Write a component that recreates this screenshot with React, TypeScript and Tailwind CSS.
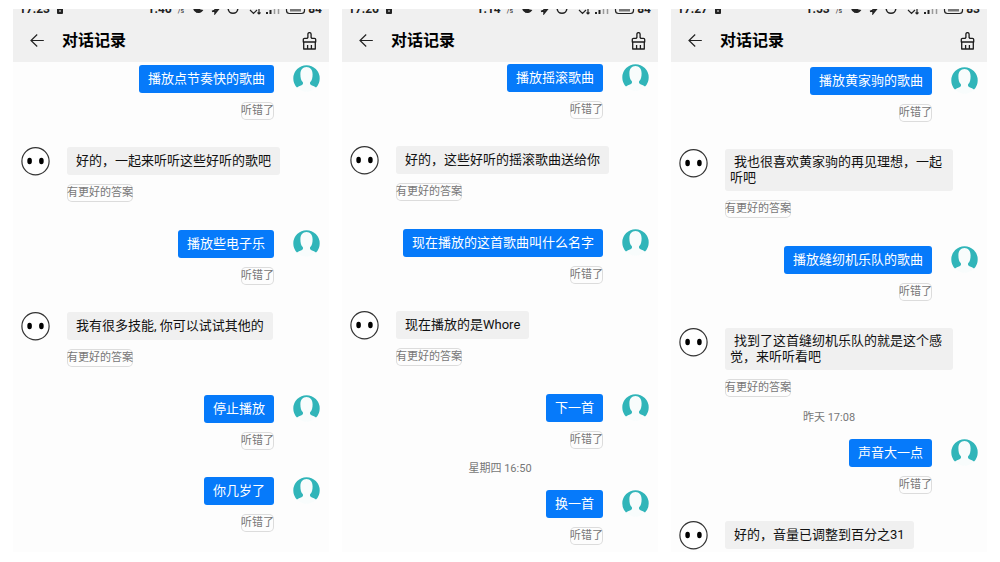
import clsx from "clsx";

type Message = {
  from: "user" | "bot";
  text: string;
  time?: string;
  noFeedback?: boolean;
};

type Screen = {
  clock: string;
  speed: string;
  battery: string;
  offset: string;
  messages: Message[];
};

const screens: Screen[] = [
  {
    clock: "17:23",
    speed: "1.46",
    battery: "84",
    offset: "pt-[3px]",
    messages: [
      { from: "user", text: "播放点节奏快的歌曲" },
      { from: "bot", text: "好的，一起来听听这些好听的歌吧" },
      { from: "user", text: "播放些电子乐" },
      { from: "bot", text: "我有很多技能, 你可以试试其他的" },
      { from: "user", text: "停止播放" },
      { from: "user", text: "你几岁了" },
    ],
  },
  {
    clock: "17:26",
    speed: "1.14",
    battery: "84",
    offset: "pt-0.5",
    messages: [
      { from: "user", text: "播放摇滚歌曲" },
      { from: "bot", text: "好的，这些好听的摇滚歌曲送给你" },
      { from: "user", text: "现在播放的这首歌曲叫什么名字" },
      { from: "bot", text: "现在播放的是Whore" },
      { from: "user", text: "下一首" },
      { from: "user", text: "换一首", time: "星期四 16:50" },
    ],
  },
  {
    clock: "17:27",
    speed: "1.53",
    battery: "83",
    offset: "pt-[5px]",
    messages: [
      { from: "user", text: "播放黄家驹的歌曲" },
      { from: "bot", text: "我也很喜欢黄家驹的再见理想，一起听吧" },
      { from: "user", text: "播放缝纫机乐队的歌曲" },
      { from: "bot", text: "找到了这首缝纫机乐队的就是这个感觉，来听听看吧" },
      { from: "user", text: "声音大一点", time: "昨天 17:08" },
      { from: "bot", text: "好的，音量已调整到百分之31", noFeedback: true },
    ],
  },
];

function UserAvatar() {
  return (
    <svg viewBox="0 0 27 27" className="size-[27px] shrink-0" aria-hidden="true">
      <circle cx="13.5" cy="13.5" r="13.2" fill="#f8fcfc" />
      <path
        d="M4 22.6A13.2 13.2 0 1 1 23 22.6C21.8 21.4 19.2 20.7 17.7 19.8C16.8 19.2 16.8 17.9 17.3 17C18.9 15.2 19.6 12.8 19.6 9.4C19.6 4.8 17.3 2 13.5 2C9.7 2 7.4 4.8 7.4 9.4C7.4 12.8 8.1 15.2 9.7 17C10.2 17.9 10.2 19.2 9.3 19.8C7.8 20.7 5.2 21.4 4 22.6Z"
        fill="#31b5b9"
      />
    </svg>
  );
}

function BotAvatar() {
  return (
    <svg viewBox="0 0 29 29" className="size-[29px] shrink-0" aria-hidden="true">
      <circle cx="14.5" cy="14.2" r="13.6" fill="#fff" stroke="#333" strokeWidth="1.2" />
      <ellipse cx="8.6" cy="14" rx="2.3" ry="3.2" fill="#000" />
      <ellipse cx="20.4" cy="14" rx="2.3" ry="3.2" fill="#000" />
    </svg>
  );
}

function StatusBar({ clock, speed, battery }: Omit<Screen, "offset" | "messages">) {
  return (
    <div className="h-[11px] overflow-hidden">
      <div className="-mt-2 flex h-4 items-center pr-[7px] pl-1.5 text-xs leading-4 font-bold text-[#222]">
        <span>{clock}</span>
        <svg viewBox="0 0 6 10" className="ml-[7px] h-2.5 w-1.5" aria-hidden="true">
          <rect width="6" height="10" rx="1" fill="#222" />
          <path d="M2 7h2" stroke="#f0f0f0" />
        </svg>
        <span className="ml-auto">{speed}</span>
        <span className="ml-1.5 self-end text-[7px] leading-3 font-normal">/s</span>
        <svg
          viewBox="0 0 128 12"
          className="ml-2 h-3 w-32"
          fill="none"
          stroke="#222"
          strokeWidth="1.5"
          aria-hidden="true"
        >
          <path d="M4 1a4.500 4.500 0 1 0 6 6.500A7 7 0 0 1 4 1Z" fill="#222" />
          <path d="M4 7.500h4" strokeWidth="4" />
          <path d="M20 8.500l7-3-4 5V1l4 4" />
          <circle cx="41" cy="5.500" r="4.800" />
          <path d="M58 7l3.500 3.500L65 7M67 5v6M65.500 9.500L67 11l1.500-1.500" strokeWidth="1.200" />
          <path d="M75 9v2M78.500 7v4" strokeWidth="2" />
          <path d="M82.500 5v6M86.500 3v8" stroke="#999" />
          <rect x="94.500" y="2" width="18" height="8.500" rx="3" strokeWidth="1.200" />
          <path d="M98 7h11" stroke="#777" strokeWidth="3" />
        </svg>
        <span className="-ml-3">{battery}</span>
      </div>
    </div>
  );
}

function TitleBar() {
  return (
    <div className="flex h-[42px] items-center pr-3 pl-[17px]">
      <button type="button" aria-label="返回">
        <svg
          viewBox="0 0 14 14"
          className="size-3.5"
          fill="none"
          stroke="#222"
          strokeWidth="1.2"
          aria-hidden="true"
        >
          <path d="M13.8 6.5H1M7.2 .5L1 6.5L7.2 12.5" />
        </svg>
      </button>
      <h2 className="ml-[18px] text-base leading-6 font-bold text-black">对话记录</h2>
      <button type="button" aria-label="清空" className="ml-auto">
        <svg
          viewBox="0 0 15 18"
          className="h-[18px] w-[15px]"
          fill="none"
          stroke="#1c1c1c"
          strokeWidth="1.3"
          strokeLinejoin="round"
          aria-hidden="true"
        >
          <path d="M5.9 5.5V2.2a1.6 1.6 0 0 1 3.2 0v3.3L9.8 6.3H12.5a1.2 1.2 0 0 1 1.2 1.2v2.5H1.3V7.5a1.2 1.2 0 0 1 1.2-1.2H5.2Z" />
          <path d="M1.7 10v7h11.6v-7M5.6 13v4M9.4 13v4" />
        </svg>
      </button>
    </div>
  );
}

function MessageRow({ from, text, time, noFeedback }: Message) {
  const isUser = from === "user";
  return (
    <li className={clsx("last:pb-0", isUser ? "pb-[27px]" : "pb-7")}>
      {time && (
        <time className="-mt-[15px] mb-[13px] block text-center text-[11px] leading-4 text-[#777]">
          {time}
        </time>
      )}
      <div
        className={clsx(
          "flex items-start",
          isUser ? "flex-row-reverse gap-[19px] pr-[9px]" : "gap-[17px] pl-2",
        )}
      >
        {isUser ? <UserAvatar /> : <BotAvatar />}
        <div className={clsx("flex flex-col gap-[9px]", isUser ? "items-end" : "items-start")}>
          <p
            className={clsx(
              "flex min-h-7 max-w-[228px] items-center rounded-[3px] py-[5px] pr-[9px] pl-[5px] indent-1 text-[13px] leading-4",
              isUser ? "bg-[#067afa] text-white" : "bg-[#f0f0f0] text-[#111]",
            )}
          >
            {text}
          </p>
          {!noFeedback && (
            <button
              type="button"
              className="h-[18px] rounded-[5px] text-[11px] leading-4 text-[#777] ring-1 ring-[#dcdcdc] ring-inset"
            >
              {isUser ? "听错了" : "有更好的答案"}
            </button>
          )}
        </div>
      </div>
    </li>
  );
}

export default function App() {
  return (
    <main className="grid min-h-screen grid-cols-3 gap-[13px] bg-white px-[13px] pt-[9px] pb-2.5 font-[Roboto,'Noto_Sans_CJK_SC',sans-serif]">
      {screens.map((screen) => (
        <section key={screen.clock} className="bg-[#fdfdfd]">
          <header className="bg-[#f0f0f0]">
            <StatusBar clock={screen.clock} speed={screen.speed} battery={screen.battery} />
            <TitleBar />
          </header>
          <ul className={screen.offset}>
            {screen.messages.map((message) => (
              <MessageRow key={message.text} {...message} />
            ))}
          </ul>
        </section>
      ))}
    </main>
  );
}
